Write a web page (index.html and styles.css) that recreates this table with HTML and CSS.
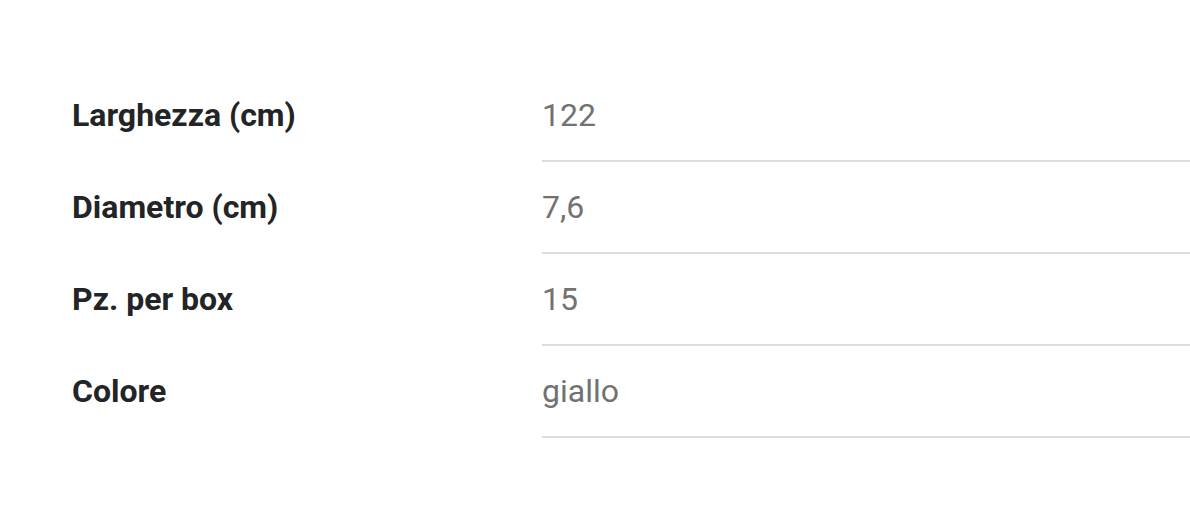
FILE: index.html
```html
<!DOCTYPE html>
<html>
<head>
<meta charset="utf-8">
<link rel="stylesheet" href="styles.css">
</head>
<body>
<div class="specs">
  <div class="row">
    <div class="label">Larghezza (cm)</div>
    <div class="value">122</div>
  </div>
  <div class="row">
    <div class="label">Diametro (cm)</div>
    <div class="value">7,6</div>
  </div>
  <div class="row">
    <div class="label">Pz. per box</div>
    <div class="value">15</div>
  </div>
  <div class="row">
    <div class="label">Colore</div>
    <div class="value">giallo</div>
  </div>
</div>
</body>
</html>
```

FILE: styles.css
```css
html, body {
  margin: 0;
  padding: 0;
  background: #ffffff;
}
body {
  font-family: Roboto, "Liberation Sans", sans-serif;
}
.specs {
  padding: 70px 0 0 72px;
  display: flex;
  flex-direction: column;
}
.row {
  display: grid;
  grid-template-columns: 470px 1fr;
  height: 92px;
}
.label {
  font-weight: 700;
  font-size: 32px;
  color: #222426;
  display: flex;
  align-items: center;
  height: 90px;
}
.value {
  font-size: 32px;
  color: #727272;
  display: flex;
  align-items: center;
  border-bottom: 2px solid #dddddd;
}
```
